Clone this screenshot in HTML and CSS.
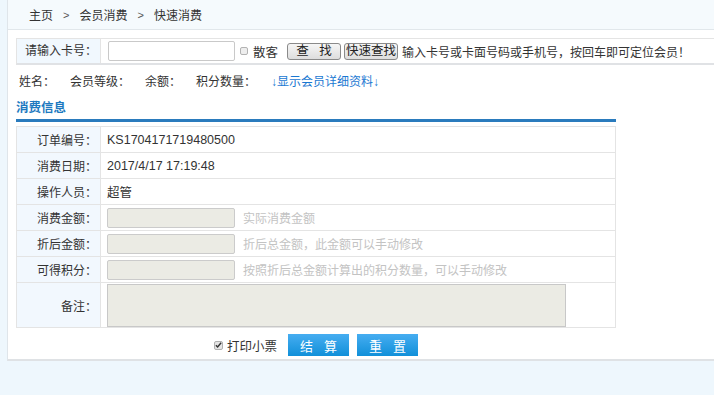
FILE: index.html
```html
<!DOCTYPE html>
<html lang="zh-CN">
<head>
  <meta charset="UTF-8" />
  <title>快速消费</title>
  <link rel="stylesheet" href="styles.css">
</head>
<body>
  <div class="panel">
    <div class="crumb">
      <span>主页</span><span class="sep">&gt;</span><span>会员消费</span><span class="sep">&gt;</span><span>快速消费</span>
    </div>

    <div class="content">
      <div class="search">
        <div class="search-label">请输入卡号：</div>
        <div class="search-body">
          <input type="text" class="card-input" value="">
          <span class="chk"></span><span class="chk-text">散客</span>
          <button class="btn-sys btn-find">查&nbsp;&nbsp;&nbsp;找</button>
          <button class="btn-sys btn-quick">快速查找</button>
          <span class="search-tip">输入卡号或卡面号码或手机号，按回车即可定位会员！</span>
        </div>
      </div>

      <div class="member">
        <span class="m-name">姓名：</span>
        <span class="m-level">会员等级：</span>
        <span class="m-money">余额：</span>
        <span class="m-point">积分数量：</span>
        <a class="m-link" href="#">↓显示会员详细资料↓</a>
      </div>

      <div class="sec-title">消费信息</div>
      <div class="sec-bar"></div>

      <table class="form">
        <tr><td class="lbl">订单编号：</td><td class="val">KS1704171719480500</td></tr>
        <tr><td class="lbl">消费日期：</td><td class="val">2017/4/17 17:19:48</td></tr>
        <tr><td class="lbl">操作人员：</td><td class="val">超管</td></tr>
        <tr><td class="lbl">消费金额：</td><td class="val"><input class="ro" disabled><span class="hint">实际消费金额</span></td></tr>
        <tr><td class="lbl">折后金额：</td><td class="val"><input class="ro" disabled><span class="hint">折后总金额，此金额可以手动修改</span></td></tr>
        <tr><td class="lbl">可得积分：</td><td class="val"><input class="ro" disabled><span class="hint">按照折后总金额计算出的积分数量，可以手动修改</span></td></tr>
        <tr class="memo-row"><td class="lbl">备注：</td><td class="val"><textarea class="memo" disabled></textarea></td></tr>
      </table>

      <div class="actions">
        <span class="chk checked"><svg width="8" height="8" viewBox="0 0 8 8"><path d="M1 4.2 L3 6.3 L7 1.5" fill="none" stroke="#333" stroke-width="1.6"/></svg></span><span class="print">打印小票</span>
        <button class="btn-blue">结&nbsp;&nbsp;&nbsp;算</button>
        <button class="btn-blue">重&nbsp;&nbsp;&nbsp;置</button>
      </div>
    </div>
  </div>
</body>
</html>
```

FILE: styles.css
```css
*{box-sizing:border-box;margin:0;padding:0}
html,body{height:100%}
body{background:#eef7fd;font-family:"Liberation Sans","Noto Sans CJK SC",sans-serif;font-size:12px;color:#333;overflow:hidden}

.panel{margin-left:7px;width:780px;height:361px;background:#fff;border-left:1px solid #dfe5ea;border-bottom:2px solid #dfe2e5}
.crumb{height:30px;background:#f5fafd;border-bottom:1px solid #e1e7eb;padding-left:21px;display:flex;align-items:center;color:#333}
.crumb .sep{margin:0 10px;font-size:11px;color:#555}

.content{padding:8px 0 0 8px}

.search{display:flex;height:27px;border:1px solid #e4e4e4;border-bottom:2px solid #e0e2e5;border-right:none}
.search-label{width:84px;background:#f1f8fe;border-right:1px solid #e4e4e4;text-align:right;padding-right:3px;line-height:24px;font-size:12px}
.search-body{display:flex;align-items:center;padding-left:6px;border-left:1px solid #fff;white-space:nowrap}
.card-input{width:127px;height:20px;border:1px solid #c9c9c9;border-radius:2px;padding-left:3px;font-size:12px}
.chk{display:inline-block;width:8px;height:8px;border:1px solid #b3b3b3;background:#eee;border-radius:2px;margin-left:5px}
.chk-text{margin-left:5px;font-size:12.5px}
.btn-sys{font-family:"Liberation Sans","Noto Sans CJK SC",sans-serif;font-size:12.5px;height:17px;line-height:14px;border:1px solid #8a8a8a;border-radius:3px;background:linear-gradient(#f6f6f6,#dddddd);color:#222;padding:0 2px}
.btn-find{margin-left:9px;width:54px}
.btn-quick{margin-left:3px;padding:0 1px}
.search-tip{margin-left:4px;font-size:12px;color:#333}

.member{height:31px;display:flex;align-items:center;padding-left:3px;font-size:12px}
.m-name{width:51px}
.m-level{width:75px}
.m-money{width:51px}
.m-point{width:75px}
.m-link{color:#1a78d2;text-decoration:none}

.sec-title{height:23px;line-height:24px;color:#1d79c0;font-weight:bold;font-size:12.5px}
.sec-bar{width:600px;height:3px;background:#2a7bbd}

.form{margin-top:4px;width:600px;border-collapse:collapse;border:1px solid #e2e2e2}
.form td{border:1px solid #e4e4e4;height:26px;padding:0}
.form .lbl{width:84px;background:#f2f8fe;text-align:right;padding-right:3px;font-size:12px}
.form .val{padding-left:6px;font-size:12.5px;color:#333}
.ro{width:128px;height:20px;border:1px solid #cbcbcb;border-radius:2px;background:#ebebe4;vertical-align:middle}
.hint{margin-left:8px;color:#c3c3c3;font-size:12px;vertical-align:middle}
.memo-row td{height:44px}
.memo{display:block;width:459px;height:43px;border:1px solid #c8c8c8;background:#ebebe4;resize:none;margin-top:1px}

.actions{width:600px;display:flex;justify-content:center;align-items:center;margin-top:6px;height:22px}
.actions .chk{display:flex;align-items:center;justify-content:center;margin:0;width:9px;height:9px;background:#e4e4e4;border-color:#b0b0b0}
.print{margin-left:4px;margin-right:11px;font-size:12.5px;color:#333}
.btn-blue{width:61px;height:22px;border:none;background:linear-gradient(#46adf1,#1190d9);color:#fff;font-family:"Liberation Sans","Noto Sans CJK SC",sans-serif;font-size:13px}
.btn-blue + .btn-blue{margin-left:8px}
```
